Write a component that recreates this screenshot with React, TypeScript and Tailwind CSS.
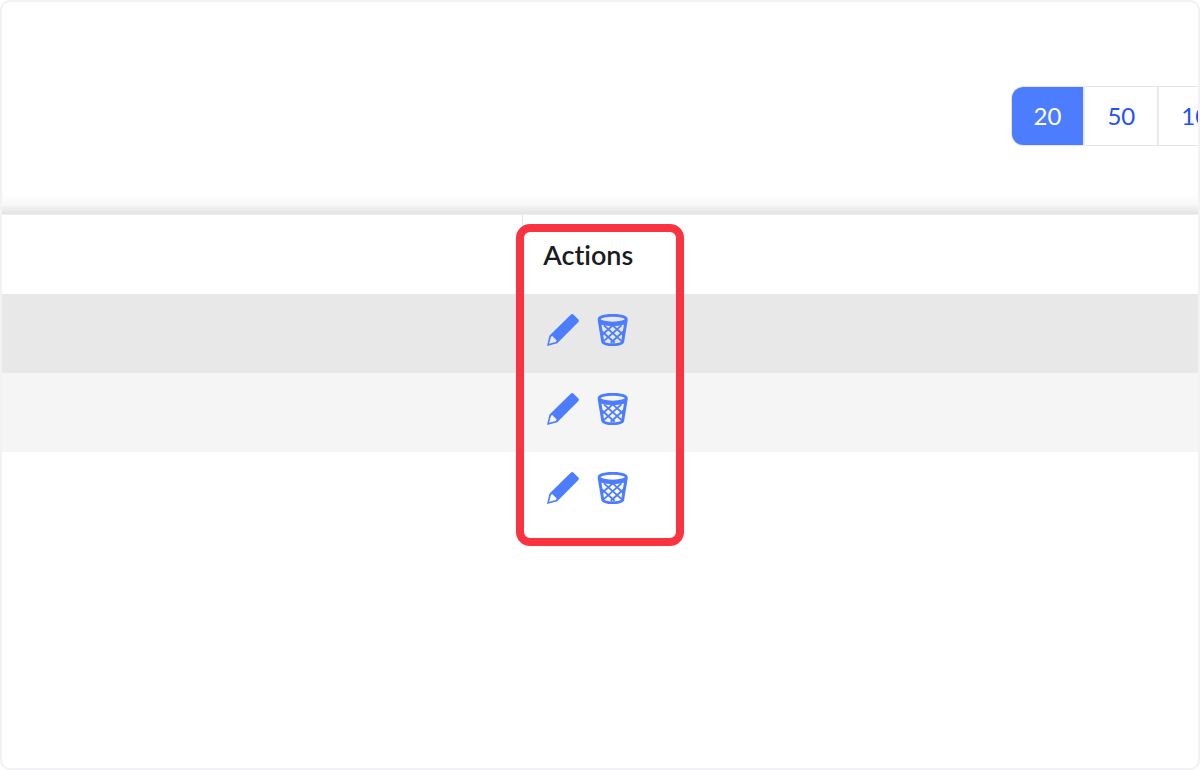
import { useState } from "react";

const pageSizes = [20, 50, 100];
const rows = [
  { id: 1, bg: "bg-[#e8e8e8]" },
  { id: 2, bg: "bg-[#f5f5f5]" },
  { id: 3, bg: "bg-white" },
];

export default function App() {
  const [pageSize, setPageSize] = useState(20);

  return (
    <div className="min-h-screen overflow-hidden rounded-[10px] border-2 border-[#f1f1f6] bg-white font-['Lato',sans-serif] text-2xl [font-variant-ligatures:none]">
      <div className="flex justify-end pt-[84px]">
        <div className="-mr-12 flex rounded-xl border border-[#e4e4ea] bg-white">
          {pageSizes.map((size) => (
            <PageSizeButton key={size} size={size} active={size === pageSize} onClick={() => setPageSize(size)} />
          ))}
        </div>
      </div>
      <div className="mt-[49px] h-5 border-b border-[#efefef] bg-linear-to-b from-white via-[#f7f7f7] to-[#e3e3e3]" />

      <table className="w-full table-fixed border-separate border-spacing-0">
        <thead>
          <tr className="h-[79px]">
            <td className="w-[43.5%]" />
            <th scope="col" className="relative border-l border-[#e4e4e4] px-5 text-left text-[27px] font-semibold text-[#1b1c1d]">
              Actions
              <div className="pointer-events-none absolute top-[9px] -left-[7px] h-[322px] w-[168px] rounded-[14px] border-8 border-[#f93440]" />
            </th>
          </tr>
        </thead>
        <tbody>
          {rows.map((row) => (
            <tr key={row.id} className={`h-[79px] ${row.bg}`}>
              <td />
              <td className="px-[25px] pt-5 align-top">
                <div className="flex gap-[18px] text-[#4c7dff]">
                  <button type="button" aria-label="Edit">
                    <PencilIcon />
                  </button>
                  <button type="button" aria-label="Delete">
                    <BasketIcon />
                  </button>
                </div>
              </td>
            </tr>
          ))}
        </tbody>
      </table>
    </div>
  );
}

function PageSizeButton({ size, active, onClick }: { size: number; active: boolean; onClick: () => void }) {
  return (
    <button
      type="button"
      onClick={onClick}
      className={`h-[58px] border-l-2 border-[#e9e9ef] px-[22px] first:rounded-l-[11px] first:border-l-0 ${
        active ? "bg-[#4c7dff] text-white" : "text-[#1f4fff]"
      }`}
    >
      {size}
    </button>
  );
}

function PencilIcon() {
  return (
    <svg className="size-8" viewBox="0 0 32 32" fill="currentColor" aria-hidden="true">
      <path
        fillRule="evenodd"
        d="M24 .6Q25.2-.4 26.4.6L31.4 5.6Q32.3 6.8 31.4 8L11 28.4Q10.3 29.2 9.4 29.4L0 32L2.3 22.3Q2.6 21.4 3.3 20.7ZM4 22.8L2.1 29.7L8.8 28L9.7 26.5L5.3 22Z"
      />
    </svg>
  );
}

function BasketIcon() {
  return (
    <svg className="size-8" viewBox="0 0 32 32" fill="none" stroke="currentColor" aria-hidden="true">
      <ellipse cx="15.7" cy="5.2" rx="13.6" ry="3.9" strokeWidth="2.9" />
      <path d="M2.2 6L5.8 28C8.2 31.6 23.2 31.6 25.6 28L29.2 6" strokeWidth="3" />
      <path d="M2 6C6 10 25.4 10 29.4 6L28 10.5Q15.7 14 3.4 10.500Z" fill="currentColor" stroke="none" />
      <path
        d="M6.900 11.400L25.200 27.600M15.700 11.400L26.700 21.200M4.700 17.200L17.700 28.800M24.500 11.400L6.200 27.600M15.700 11.400L4.700 21.200M26.700 17.200L13.700 28.800"
        strokeWidth="1.900"
      />
    </svg>
  );
}
